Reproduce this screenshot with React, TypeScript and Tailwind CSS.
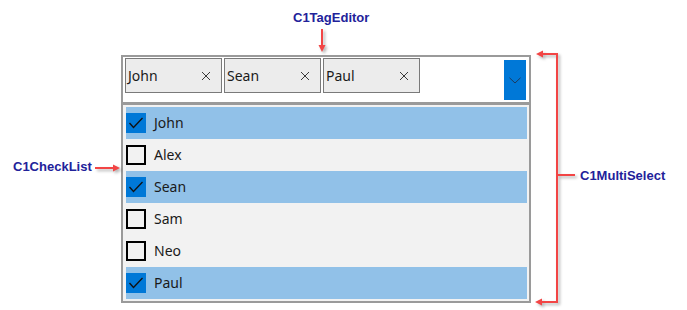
import React from 'react';

interface Item {
  name: string;
  checked: boolean;
}

const items: Item[] = [
  { name: 'John', checked: true },
  { name: 'Alex', checked: false },
  { name: 'Sean', checked: true },
  { name: 'Sam', checked: false },
  { name: 'Neo', checked: false },
  { name: 'Paul', checked: true },
];

const tags = items.filter((i) => i.checked).map((i) => i.name);

const Tag: React.FC<{ label: string }> = ({ label }) => (
  <div className="flex items-center justify-between w-[97px] h-[35px] border border-[#7a7a7a] bg-[#ececec] pl-[2px] pr-[10px]">
    <span className="text-[14px] text-[#1a1a1a] leading-none">{label}</span>
    <svg width="10" height="10" viewBox="0 0 10 10" className="shrink-0">
      <path d="M1 1 L9 9 M9 1 L1 9" stroke="#3a3a3a" strokeWidth="1" fill="none" />
    </svg>
  </div>
);

const CheckBox: React.FC<{ checked: boolean }> = ({ checked }) =>
  checked ? (
    <div className="w-[20px] h-[20px] bg-[#0078d7] shrink-0">
      <svg width="20" height="20" viewBox="0 0 20 20">
        <path d="M3.5 10 L7.5 14.5 L16.5 5" stroke="#111" strokeWidth="1.3" fill="none" />
      </svg>
    </div>
  ) : (
    <div className="w-[20px] h-[20px] border-2 border-black bg-transparent shrink-0" />
  );

const Annotations: React.FC = () => (
  <svg
    width="687"
    height="310"
    className="absolute inset-0 pointer-events-none drop-shadow-[2px_2px_1.5px_rgba(0,0,0,0.3)]"
  >
    {/* C1TagEditor */}
    <line x1="322" y1="29" x2="322" y2="46" stroke="#f24545" strokeWidth="2" />
    <polygon points="318.5,45 325.5,45 322,52" fill="#f24545" />
    {/* C1CheckList */}
    <line x1="95" y1="168" x2="114" y2="168" stroke="#f24545" strokeWidth="2" />
    <polygon points="113,164.5 113,171.5 120,168" fill="#f24545" />
    {/* C1MultiSelect bracket */}
    <path d="M542 54 H557 V302 H541" stroke="#f24545" strokeWidth="2" fill="none" />
    <polygon points="543,50.5 543,57.5 536,54" fill="#f24545" />
    <polygon points="542,298.5 542,305.5 535,302" fill="#f24545" />
    <line x1="557" y1="175" x2="575" y2="175" stroke="#f24545" strokeWidth="2" />
  </svg>
);

const App: React.FC = () => {
  return (
    <div className="relative w-[687px] h-[310px] bg-white overflow-hidden font-['Noto_Sans',sans-serif]">
      <div className="ml-[121px] pt-[55px] w-[410px]">
        {/* tag editor header */}
        <div className="flex h-[50px] border-2 border-b-[3px] border-[#9a9a9a] bg-white">
          <div className="flex gap-[2px] pl-[2px] pt-[1px]">
            {tags.map((t) => (
              <Tag key={t} label={t} />
            ))}
          </div>
          <div className="ml-auto mt-[3px] mr-[3px] w-[22px] h-[40px] bg-[#0078d7] flex items-center justify-center">
            <svg width="12" height="7" viewBox="0 0 12 7">
              <path d="M0.5 0.8 L6 6 L11.5 0.8" stroke="#1d3b5e" strokeWidth="1" fill="none" />
            </svg>
          </div>
        </div>

        {/* check list */}
        <div className="border-2 border-t-0 border-[#9a9a9a] bg-[#f2f2f2] pl-[3px] pr-[2px] py-[2px]">
          {items.map((item) => (
            <div
              key={item.name}
              className={
                item.checked
                  ? 'flex items-center h-[32px] bg-[#91c1e8]'
                  : 'flex items-center h-[32px]'
              }
            >
              <CheckBox checked={item.checked} />
              <span className="ml-[8px] text-[14px] text-[#1a1a1a] leading-none">{item.name}</span>
            </div>
          ))}
        </div>
      </div>

      <Annotations />

      <span className="absolute left-[293px] top-[11px] text-[13px] leading-none font-bold text-[#22229a] font-['Liberation_Sans',Arial,sans-serif]">
        C1TagEditor
      </span>
      <span className="absolute left-[13px] top-[160px] text-[13px] leading-none font-bold text-[#22229a] font-['Liberation_Sans',Arial,sans-serif]">
        C1CheckList
      </span>
      <span className="absolute left-[580px] top-[169px] text-[13px] leading-none font-bold text-[#22229a] font-['Liberation_Sans',Arial,sans-serif]">
        C1MultiSelect
      </span>
    </div>
  );
};

export default App;
